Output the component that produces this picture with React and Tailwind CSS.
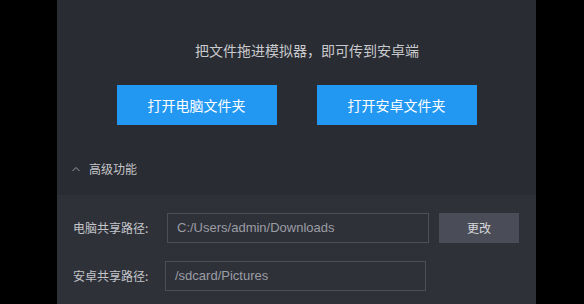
export default function App() {
  const font = { fontFamily: '"Noto Sans CJK SC", "Liberation Sans", sans-serif' };
  return (
    <div className="w-[584px] h-[304px] bg-black pl-[57px] overflow-hidden" style={font}>
      <div className="w-[479px] h-[304px] flex flex-col">
        <div className="h-[195px] bg-[#2a2c33] flex flex-col">
          <div className="pt-[40px] pl-[21px] text-center text-[14px] leading-[20px] text-[#c9cacd]">
            把文件拖进模拟器，即可传到安卓端
          </div>
          <div className="mt-[25px] flex justify-center gap-[40px]">
            <button className="w-[160px] h-[40px] bg-[#2298f2] text-white text-[14px]">打开电脑文件夹</button>
            <button className="w-[160px] h-[40px] bg-[#2298f2] text-white text-[14px]">打开安卓文件夹</button>
          </div>
          <div className="mt-[36px] flex items-center pl-[15px] h-[16px]">
            <svg width="8" height="6" viewBox="0 0 8 6" className="mr-[9px]">
              <polyline points="0.5,5 4,1.5 7.5,5" fill="none" stroke="#9a9ca2" strokeWidth="1" />
            </svg>
            <span className="text-[12px] leading-[16px] text-[#c4c5c9]">高级功能</span>
          </div>
        </div>
        <div className="flex-1 bg-[#2f3139] flex flex-col pt-[18px] gap-[18px]">
          <div className="flex items-center pl-[16px]">
            <span className="w-[94px] text-[12px] text-[#c4c5c9]">电脑共享路径:</span>
            <div className="w-[262px] h-[30px] border border-[#4b4e58] flex items-center pl-[9px] text-[13px] text-[#9b9da4]" style={{ fontFamily: '"Liberation Sans", sans-serif' }}>
              C:/Users/admin/Downloads
            </div>
            <button className="ml-[10px] w-[80px] h-[30px] bg-[#4a4d58] text-[12px] text-[#d6d7da]">更改</button>
          </div>
          <div className="flex items-center pl-[16px]">
            <span className="w-[92px] text-[12px] text-[#c4c5c9]">安卓共享路径:</span>
            <div className="w-[261px] h-[30px] border border-[#4b4e58] flex items-center pl-[9px] text-[13px] text-[#9b9da4]" style={{ fontFamily: '"Liberation Sans", sans-serif' }}>
              /sdcard/Pictures
            </div>
          </div>
        </div>
      </div>
    </div>
  );
}
